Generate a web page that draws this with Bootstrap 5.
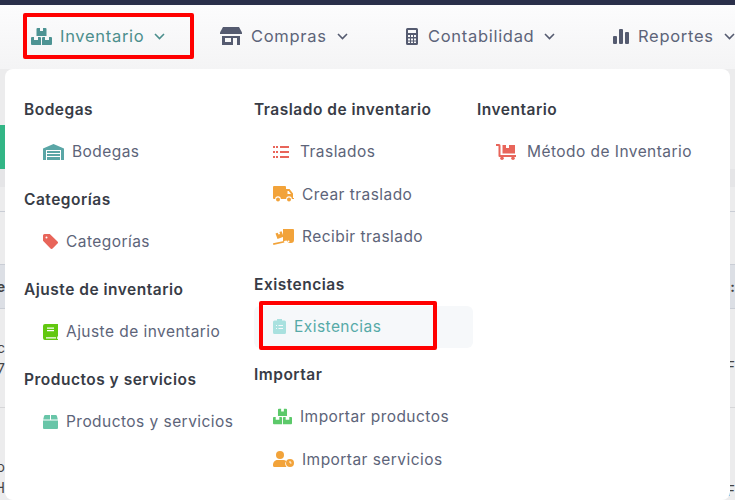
<!DOCTYPE html>
<html lang="es">

<head>
  <meta charset="UTF-8">
  <title>Inventario</title>
  <link href="https://cdn.jsdelivr.net/npm/bootstrap@5.3.0/dist/css/bootstrap.min.css" rel="stylesheet">
  <style>
    html, body { width: 735px; height: 500px; overflow: hidden; }
    body { background: #ececed; font-family: Inter, "Liberation Sans", sans-serif; color: #3a3f4a; position: relative; }
    .top-strip { height: 5px; background: #2a2f4a; }
    .main-bar { height: 64px; padding: 0 0 2px 31px; background: linear-gradient(#fcfcfd, #f4f4f5); flex-wrap: nowrap; }
    .main-link { color: #5d6479; font-size: 16.5px; letter-spacing: .7px; padding: 0; white-space: nowrap; }
    .main-link.current { color: #4c8f8d; }
    .link-a { width: 189px; }
    .link-b { width: 186px; }
    .link-c { width: 207px; }
    .link-a svg { margin-right: 8px; }
    .link-b svg { margin-right: 9px; }
    .link-c svg { margin-right: 10px; }
    .link-d svg { margin-right: 9px; }
    .link-a svg.chev, .link-b svg.chev, .link-c svg.chev, .link-d svg.chev { margin-right: 0; margin-left: 10px; }

    .under { font-size: 14px; color: #444; white-space: nowrap; }
    .under-green { height: 44px; margin-top: 56px; width: 60px; background: #32b585; }
    .under-pale { height: 18px; background: #e5e5e7; }
    .under-row { border-bottom: 1px solid #c9cdd5; }
    .under-h1 { height: 25px; }
    .under-h2 { height: 53px; }
    .under-head { height: 44px; background: #dcdfe5; font-weight: 700; border-bottom: 1px solid #c9cdd5; }
    .under-body { height: 99px; border-bottom: 1px solid #d6d6d8; }
    .under-cell { display: block; margin-left: -75px; width: 80px; text-align: right; overflow: hidden; }

    .mega-menu { display: block; position: absolute; top: 69px; left: 5px; width: 725px; height: 431px; margin: 0; padding: 31px 0 0 19px; background: #fff; border: 0; border-radius: 8px; }
    .mega-col-a { width: 230px; }
    .mega-col-b { width: 223px; }
    .mega-title { height: 20px; line-height: 20px; margin: 0 0 10.5px; font-size: 15.5px; font-weight: 600; letter-spacing: .5px; color: #383c46; white-space: nowrap; }
    .mega-group { margin-bottom: 17px; }
    .mega-item { height: 42.5px; padding: 0 0 0 19px; font-size: 15.5px; letter-spacing: .45px; color: #5d6479; white-space: nowrap; }
    .mega-item svg { margin-right: 8px; flex: none; }
    .mega-item.sel { background: #f6f8fa; color: #56aaa8; border-radius: 6px; width: 219px; }
    .mega-item .wide-gap { margin-right: 11px; }

    .red-mark { position: absolute; z-index: 1001; border: 4px solid #f00; border-radius: 2px; }
    .red-one { left: 23px; top: 13px; width: 171px; height: 46px; }
    .red-two { left: 259px; top: 301px; width: 178px; height: 49px; }
  </style>
</head>

<body>
  <div class="top-strip"></div>
  <nav class="nav main-bar align-items-center">
    <a class="nav-link main-link current link-a d-flex align-items-center" href="#">
      <svg width="21" height="17" viewBox="0 0 21 17"><path fill="#4d9393" fill-rule="evenodd" d="M6.500 0h2.500v3h3V0h2.500a1 1 0 0 1 1 1v7H5.500V1a1 1 0 0 1 1-1zM1 9h2v3h4V9h2a1 1 0 0 1 1 1v7H1a1 1 0 0 1-1-1v-6a1 1 0 0 1 1-1zM12 9h2v3h4V9h2a1 1 0 0 1 1 1v6a1 1 0 0 1-1 1h-9v-7a1 1 0 0 1 1-1z"/></svg>
      Inventario
      <svg class="chev" width="11" height="7" viewBox="0 0 11 7"><path d="M1 1l4.500 4.500L10 1" fill="none" stroke="#4c8f8d" stroke-width="1.600"/></svg>
    </a>
    <a class="nav-link main-link link-b d-flex align-items-center" href="#">
      <svg width="22" height="18" viewBox="0 0 22 18"><path fill="#555b70" d="M3 0h16l3 5.500V7H0V5.500z"/><path fill="#555b70" fill-rule="evenodd" d="M2 9h18v9h-5V11h-2v7H2zM5 11v4h6v-4zM17 11v7h-2v-7z"/></svg>
      Compras
      <svg class="chev" width="11" height="7" viewBox="0 0 11 7"><path d="M1 1l4.500 4.500L10 1" fill="none" stroke="#555b70" stroke-width="1.600"/></svg>
    </a>
    <a class="nav-link main-link link-c d-flex align-items-center" href="#">
      <svg width="12" height="17" viewBox="0 0 12 17"><path fill="#555b70" fill-rule="evenodd" d="M1.500 0h9A1.500 1.500 0 0 1 12 1.500v14a1.500 1.500 0 0 1-1.500 1.500h-9A1.500 1.500 0 0 1 0 15.500v-14A1.500 1.500 0 0 1 1.500 0zM2 2v3h8V2zM2 7v2h2V7zM5 7v2h2V7zM8 7v2h2V7zM2 10.500v2h2v-2zM5 10.500v2h2v-2zM8 10.500v2h2v-2zM2 13.500v1.500h2v-1.500zM5 13.500v1.500h2v-1.500zM8 13.500v1.500h2v-1.500z"/></svg>
      Contabilidad
      <svg class="chev" width="11" height="7" viewBox="0 0 11 7"><path d="M1 1l4.500 4.500L10 1" fill="none" stroke="#555b70" stroke-width="1.600"/></svg>
    </a>
    <a class="nav-link main-link link-d d-flex align-items-center" href="#">
      <svg width="16" height="15" viewBox="0 0 16 15"><path fill="#555b70" d="M1 7h2a1 1 0 0 1 1 1v6a1 1 0 0 1-1 1H1a1 1 0 0 1-1-1V8a1 1 0 0 1 1-1zM7 0h2a1 1 0 0 1 1 1v13a1 1 0 0 1-1 1H7a1 1 0 0 1-1-1V1a1 1 0 0 1 1-1zM13 3h2a1 1 0 0 1 1 1v10a1 1 0 0 1-1 1h-2a1 1 0 0 1-1-1V4a1 1 0 0 1 1-1z"/></svg>
      Reportes
      <svg class="chev" width="11" height="7" viewBox="0 0 11 7"><path d="M1 1l4.500 4.500L10 1" fill="none" stroke="#555b70" stroke-width="1.600"/></svg>
    </a>
  </nav>

  <!-- page behind the open menu, only its edges show -->
  <div class="under">
    <div class="under-green"></div>
    <div class="under-pale"></div>
    <div class="under-row under-h1"></div>
    <div class="under-row under-h2"></div>
    <div class="under-head d-flex justify-content-between align-items-center">
      <span class="under-cell">Nombre</span><span>:</span>
    </div>
    <div class="under-body d-flex justify-content-between align-items-center">
      <div><span class="under-cell">Inc</span><span class="under-cell">2017</span></div>
      <span class="me-n1 pt-3">F</span>
    </div>
    <div class="d-flex justify-content-between pt-5">
      <div><span class="under-cell">Teléfono</span><span class="under-cell">NH</span></div>
      <span class="me-n1 pt-4">F</span>
    </div>
  </div>

  <div class="dropdown-menu mega-menu">
    <div class="d-flex">
      <div class="mega-col-a">
        <div class="mega-group">
          <h6 class="mega-title">Bodegas</h6>
          <a class="dropdown-item mega-item d-flex align-items-center" href="#">
            <svg width="21" height="16" viewBox="0 0 21 16"><path fill="#5aa6a6" d="M0 4.500L10.500 0 21 4.500V16h-3V6H3v10H0z"/><path fill="#5aa6a6" d="M4 7h13v2H4zM4 10h13v2H4zM4 13h13v3H4z"/></svg>
            Bodegas
          </a>
        </div>
        <div class="mega-group">
          <h6 class="mega-title">Categorías</h6>
          <a class="dropdown-item mega-item d-flex align-items-center" href="#">
            <svg width="15" height="15" viewBox="0 0 15 15"><path fill="#e8655a" fill-rule="evenodd" d="M1.500 0h5.300L14.500 7.500a1.500 1.500 0 0 1 0 2.100l-4.900 4.900a1.500 1.500 0 0 1-2.100 0L0 6.800V1.500A1.500 1.500 0 0 1 1.500 0zM3.500 2.500a1 1 0 1 0 0 2 1 1 0 0 0 0-2z"/></svg>
            Categorías
          </a>
        </div>
        <div class="mega-group">
          <h6 class="mega-title">Ajuste de inventario</h6>
          <a class="dropdown-item mega-item d-flex align-items-center" href="#">
            <svg width="15" height="16" viewBox="0 0 15 16"><path fill="#62c80f" fill-rule="evenodd" d="M2 0h13v12.500h-.8V15h.8v1H2a2 2 0 0 1-2-2V2a2 2 0 0 1 2-2zM4 3.500v1.200h7V3.500zM4 6v1.200h7V6zM3 13.200v1.300h10v-1.300z"/></svg>
            Ajuste de inventario
          </a>
        </div>
        <div class="mega-group">
          <h6 class="mega-title">Productos y servicios</h6>
          <a class="dropdown-item mega-item d-flex align-items-center" href="#">
            <svg width="15" height="14" viewBox="0 0 15 14"><path fill="#68c5a8" d="M2.500 0H7v4.500H0.200L1 1.200A1.500 1.500 0 0 1 2.500 0zM8 0h4.500A1.500 1.500 0 0 1 14 1.200l.8 3.300H8zM0 5.500h15V13a1 1 0 0 1-1 1H1a1 1 0 0 1-1-1z"/></svg>
            Productos y servicios
          </a>
        </div>
      </div>

      <div class="mega-col-b">
        <div class="mega-group">
          <h6 class="mega-title">Traslado de inventario</h6>
          <a class="dropdown-item mega-item d-flex align-items-center" href="#">
            <svg class="wide-gap" width="16" height="12" viewBox="0 0 16 12"><path fill="#e8655a" d="M0 0h2v2H0zM3 0h2v2H3zM7 0h9v2H7zM0 5h2v2H0zM3 5h2v2H3zM7 5h9v2H7zM0 10h2v2H0zM3 10h2v2H3zM7 10h9v2H7z"/></svg>
            Traslados
          </a>
          <a class="dropdown-item mega-item d-flex align-items-center" href="#">
            <svg width="21" height="16" viewBox="0 0 21 16"><path fill="#f2a33a" fill-rule="evenodd" d="M1 0h11a1 1 0 0 1 1 1v2h3.500L20 7.500V12h1v1h-2.200a2.800 2.800 0 0 0-5.600 0H7.800a2.800 2.800 0 0 0-5.600 0H1a1 1 0 0 1-1-1V1a1 1 0 0 1 1-1zM14.500 5v3H18l-2.300-3z"/><circle fill="#f2a33a" cx="5" cy="13.500" r="2"/><circle fill="#f2a33a" cx="16" cy="13.500" r="2"/></svg>
            Crear traslado
          </a>
          <a class="dropdown-item mega-item d-flex align-items-center" href="#">
            <svg width="21" height="16" viewBox="0 0 21 16"><path fill="#f2a33a" d="M10 0h10a1 1 0 0 1 1 1v10a3 3 0 0 1-3 3h-2.500l-2-2.500L10 12.300z"/><circle fill="#fff" cx="15.500" cy="12.500" r="1"/><path fill="#f2a33a" d="M2.500 4.500l2.200-.8.800 1.800 1.600-.6-.7-1.800 2.200-.8 2 5.400-6.100 2.200zM0 14.300l11-2.300.4 1.600L.4 16z"/></svg>
            Recibir traslado
          </a>
        </div>
        <div class="mega-group">
          <h6 class="mega-title">Existencias</h6>
          <a class="dropdown-item mega-item sel d-flex align-items-center" href="#">
            <svg width="13" height="15" viewBox="0 0 13 15"><path fill="#a9e1df" fill-rule="evenodd" d="M4 0h5v1.500h2.500A1.500 1.500 0 0 1 13 3v10.500a1.500 1.500 0 0 1-1.500 1.500h-10A1.500 1.500 0 0 1 0 13.500V3a1.500 1.500 0 0 1 1.500-1.500H4zM3 6v1h1V6zM5.500 6v1H10V6zM3 9v1h1V9zM5.500 9v1H10V9z"/></svg>
            Existencias
          </a>
        </div>
        <div class="mega-group">
          <h6 class="mega-title">Importar</h6>
          <a class="dropdown-item mega-item d-flex align-items-center" href="#">
            <svg width="19" height="17" viewBox="0 0 21 17"><path fill="#5cc96a" fill-rule="evenodd" d="M6.500 0h2.500v3h3V0h2.500a1 1 0 0 1 1 1v7H5.500V1a1 1 0 0 1 1-1zM1 9h2v3h4V9h2a1 1 0 0 1 1 1v7H1a1 1 0 0 1-1-1v-6a1 1 0 0 1 1-1zM12 9h2v3h4V9h2a1 1 0 0 1 1 1v6a1 1 0 0 1-1 1h-9v-7a1 1 0 0 1 1-1z"/></svg>
            Importar productos
          </a>
          <a class="dropdown-item mega-item d-flex align-items-center" href="#">
            <svg width="21" height="16" viewBox="0 0 21 16"><circle fill="#f2a33a" cx="7" cy="4" r="4"/><path fill="#f2a33a" d="M3.500 9h7c1 0 2 .3 2.700 1a5 5 0 0 0 .3 6H1.500A1.500 1.500 0 0 1 0 14.500 5.500 5.500 0 0 1 3.500 9z"/><circle fill="#f2a33a" cx="17" cy="12" r="4"/><path d="M17 10v2h1.500" fill="none" stroke="#fff" stroke-width=".9"/></svg>
            Importar servicios
          </a>
        </div>
      </div>

      <div>
        <div class="mega-group">
          <h6 class="mega-title">Inventario</h6>
          <a class="dropdown-item mega-item d-flex align-items-center" href="#">
            <svg class="wide-gap" width="20" height="16" viewBox="0 0 20 16"><path fill="#e8655a" d="M0 0h3a1.500 1.500 0 0 1 1.500 1.500V11H20v2H3.500a1 1 0 0 1-1-1V2H0z"/><path fill="#e8655a" d="M6.500 1H10v3h3V1h6v8.500H6.500z"/><circle fill="#e8655a" cx="6" cy="14.200" r="1.800"/><circle fill="#e8655a" cx="17" cy="14.200" r="1.800"/></svg>
            Método de Inventario
          </a>
        </div>
      </div>
    </div>
  </div>

  <div class="red-mark red-one"></div>
  <div class="red-mark red-two"></div>

  <script src="https://cdn.jsdelivr.net/npm/bootstrap@5.3.0/dist/js/bootstrap.bundle.min.js"></script>
</body>

</html>
